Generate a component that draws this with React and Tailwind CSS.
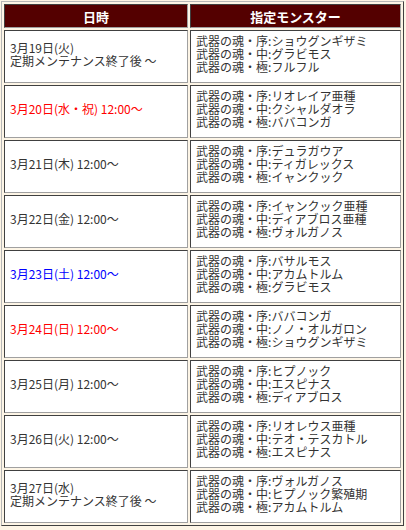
import React from "react";

const rows = [
  { date: ["3月19日(火)", "定期メンテナンス終了後 ～"], color: "text-[#333333]", m: ["ショウグンギザミ", "グラビモス", "フルフル"] },
  { date: ["3月20日(水・祝) 12:00～"], color: "text-[#ff0000]", m: ["リオレイア亜種", "クシャルダオラ", "ババコンガ"] },
  { date: ["3月21日(木) 12:00～"], color: "text-[#333333]", m: ["デュラガウア", "ティガレックス", "イャンクック"] },
  { date: ["3月22日(金) 12:00～"], color: "text-[#333333]", m: ["イャンクック亜種", "ディアブロス亜種", "ヴォルガノス"] },
  { date: ["3月23日(土) 12:00～"], color: "text-[#0000ff]", m: ["バサルモス", "アカムトルム", "グラビモス"] },
  { date: ["3月24日(日) 12:00～"], color: "text-[#ff0000]", m: ["ババコンガ", "ノノ・オルガロン", "ショウグンギザミ"] },
  { date: ["3月25日(月) 12:00～"], color: "text-[#333333]", m: ["ヒプノック", "エスピナス", "ディアブロス"] },
  { date: ["3月26日(火) 12:00～"], color: "text-[#333333]", m: ["リオレウス亜種", "テオ・テスカトル", "エスピナス"] },
  { date: ["3月27日(水)", "定期メンテナンス終了後 ～"], color: "text-[#333333]", m: ["ヴォルガノス", "ヒプノック繁殖期", "アカムトルム"] },
];

const ranks = ["序", "中", "極"];

// inset cell borders, like an old border="1" table
const cell =
  "border border-t-[#404040] border-l-[#404040] border-b-[#a0a0a0] border-r-[#a0a0a0]";

export default function App() {
  return (
    <div className="min-h-[530px] w-[406px] bg-[#fdf5e6] pt-px pl-px font-['Noto_Sans_CJK_JP',sans-serif] text-[12px] leading-[13px]">
      <table className="w-[403px] table-fixed border-separate border-spacing-[2px] border border-t-[#b8b8b8] border-l-[#b8b8b8] border-b-[#404040] border-r-[#404040]">
        <thead>
          <tr>
            <th className={`${cell} h-[24px] w-[184px] bg-[#540000] p-0 align-middle text-[13px] leading-[15px] font-bold text-white`}>
              日時
            </th>
            <th className={`${cell} h-[24px] bg-[#540000] p-0 align-middle text-[13px] leading-[15px] font-bold text-white`}>
              指定モンスター
            </th>
          </tr>
        </thead>
        <tbody>
          {rows.map((r, i) => (
            <tr key={i}>
              <td className={`${cell} h-[53px] bg-white px-[5px] pt-[3px] pb-[9px] align-middle whitespace-nowrap ${r.color}`}>
                {r.date.map((d, j) => (
                  <div key={j}>{d}</div>
                ))}
              </td>
              <td className={`${cell} h-[53px] bg-white px-[5px] pt-[3px] pb-[9px] align-middle whitespace-nowrap text-[#333333]`}>
                {r.m.map((name, j) => (
                  <div key={j}>
                    武器の魂・{ranks[j]}:{name}
                  </div>
                ))}
              </td>
            </tr>
          ))}
        </tbody>
      </table>
    </div>
  );
}
